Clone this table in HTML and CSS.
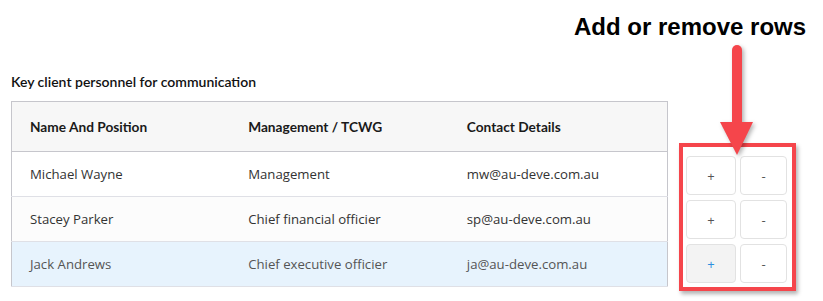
FILE: index.html
```html
<!DOCTYPE html>
<html>
<head>
<meta charset="utf-8">
<link rel="stylesheet" href="styles.css">
</head>
<body>
<div class="page">
  <div class="callout">Add or remove rows</div>
  <svg class="arrow" width="40" height="116" viewBox="0 0 40 116">
    <line x1="17" y1="5" x2="17" y2="80" stroke="#f5454b" stroke-width="10" stroke-linecap="round"/>
    <polygon points="0,77 33,77 17,110" fill="#f5454b"/>
  </svg>
  <h2 class="title">Key client personnel for communication</h2>
  <div class="content">
    <table class="grid">
      <thead>
        <tr><th>Name And Position</th><th>Management / TCWG</th><th>Contact Details</th></tr>
      </thead>
      <tbody>
        <tr><td>Michael Wayne</td><td>Management</td><td>mw@au-deve.com.au</td></tr>
        <tr class="alt"><td>Stacey Parker</td><td>Chief financial officier</td><td>sp@au-deve.com.au</td></tr>
        <tr class="selected"><td>Jack Andrews</td><td>Chief executive officier</td><td>ja@au-deve.com.au</td></tr>
      </tbody>
    </table>
    <div class="actions">
      <button class="btn add">+</button><button class="btn remove">-</button>
      <button class="btn add">+</button><button class="btn remove">-</button>
      <button class="btn add hover">+</button><button class="btn remove">-</button>
    </div>
  </div>
</div>
</body>
</html>
```
FILE: styles.css
```css
html, body {
  margin: 0;
  padding: 0;
  background: #ffffff;
}
.page {
  position: relative;
  width: 823px;
  height: 301px;
  padding: 72px 0 0 11px;
  box-sizing: border-box;
}
.callout {
  position: absolute;
  left: 574px;
  top: 12px;
  font-family: "Liberation Sans", Arial, sans-serif;
  font-weight: bold;
  font-size: 24px;
  line-height: 30px;
  color: #000;
}
.arrow {
  position: absolute;
  left: 720px;
  top: 45px;
  overflow: visible;
  filter: drop-shadow(2px 2px 2px rgba(0,0,0,0.3));
  z-index: 2;
}
.title {
  margin: 0;
  font-family: Lato, "Liberation Sans", sans-serif;
  font-weight: 600;
  font-size: 14px;
  line-height: 20px;
  color: #111;
}
.content {
  display: flex;
  align-items: flex-start;
  margin-top: 9px;
}
.grid {
  width: 657px;
  table-layout: fixed;
  border-collapse: collapse;
  border: 1px solid #c6c6cc;
}
.grid th {
  height: 49px;
  padding: 0 0 0 18px;
  text-align: left;
  background: #f7f7f7;
  font-family: Lato, "Liberation Sans", sans-serif;
  font-weight: bold;
  font-size: 13.7px;
  color: #1a1a1a;
  border-bottom: 1px solid #c6c6cc;
}
.grid td {
  height: 44px;
  padding: 0 0 0 18px;
  font-family: "Open Sans", "Noto Sans", sans-serif;
  font-size: 13.2px;
  color: #333;
  border-bottom: 1px solid #dfe0e6;
}
.grid tr.alt td {
  background: #fcfcfc;
}
.grid tr.selected td {
  background: #e7f3fd;
  color: #555;
}
.actions {
  margin: 42px 0 0 11px;
  display: grid;
  grid-template-columns: 50px 47px;
  grid-auto-rows: 39px;
  column-gap: 4px;
  row-gap: 5px;
  padding: 9px 5px 4px 3px;
  border: 4px solid #f5454b;
  box-shadow: 2px 3px 4px rgba(0,0,0,0.3);
  background: #fff;
}
.btn {
  margin: 0;
  padding: 0;
  border: 1px solid #e2e2e2;
  border-radius: 4px;
  background: #fff;
  font-family: "Open Sans", "Noto Sans", sans-serif;
  font-size: 13px;
  color: #555;
}
.btn.hover {
  background: #f3f3f3;
  color: #2b8fe0;
}
```
